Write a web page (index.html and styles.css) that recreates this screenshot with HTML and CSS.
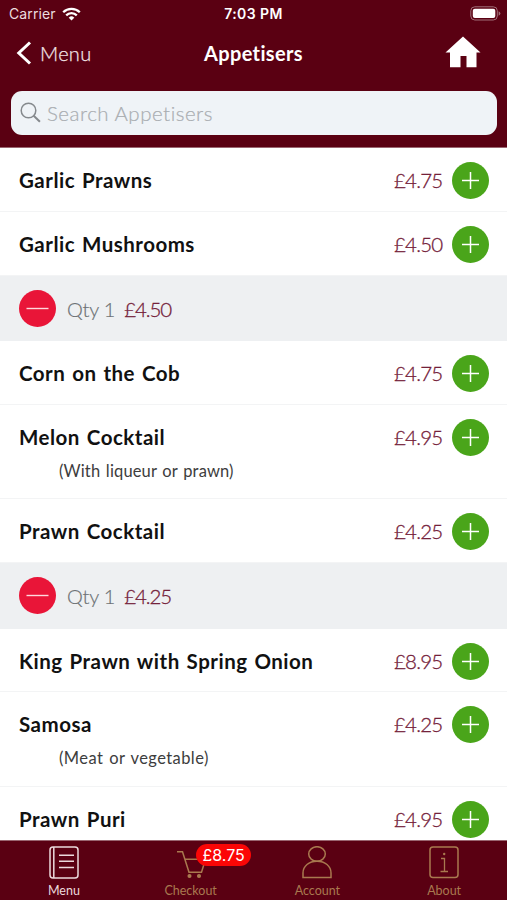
FILE: index.html
```html
<!DOCTYPE html>
<html lang="en">
<head>
<meta charset="utf-8">
<title>Appetisers</title>
<link rel="stylesheet" href="styles.css">
</head>
<body>
<svg class="sprite" aria-hidden="true">
  <symbol id="plus" viewBox="0 0 37 37"><circle cx="18.5" cy="18.5" r="18.5" fill="#4aa51a"/><path d="M10 18.5h17M18.5 10v17" stroke="#fff" stroke-width="1.5"/></symbol>
  <symbol id="minus" viewBox="0 0 37 37"><circle cx="18.5" cy="18.5" r="18.5" fill="#e91538"/><path d="M7.500 18.500h22" stroke="#ffd9dd" stroke-width="1.400"/></symbol>
</svg>
<header class="header">
  <div class="status">
    <div class="carrier"><span>Carrier</span>
      <svg width="19" height="14" viewBox="0 0 19 14" fill="none" stroke="#fff" stroke-width="2.300"><path d="M1.200 5.200a11.800 11.800 0 0 1 16.600 0M4.200 8.400a7.500 7.500 0 0 1 10.600 0"/><path d="M9.500 13.600 6.700 10.700a4 4 0 0 1 5.600 0z" fill="#fff" stroke="none"/></svg>
    </div>
    <div class="time">7:03 PM</div>
    <svg class="battery" width="31" height="15" viewBox="0 0 31 15"><rect x=".8" y=".8" width="26.500" height="13.200" rx="4" fill="none" stroke="#a06f79"/><rect x="2.800" y="2.800" width="22.500" height="9.200" rx="2" fill="#fff"/><path d="M28.600 5.200q1.800.8 1.800 2.300t-1.800 2.300z" fill="#a06f79"/></svg>
  </div>
  <nav class="nav">
    <div class="back"><svg width="16" height="24" viewBox="0 0 16 24" fill="none" stroke="#fff" stroke-width="3"><path d="M14 1.500 2.800 12 14 22.500"/></svg><span>Menu</span></div>
    <h1 class="title">Appetisers</h1>
    <svg class="home" width="36" height="32" viewBox="0 0 36 32" fill="#fff"><path d="M18 .5 35.500 16.500H31.500V31.300H21.500V20H15.500V31.300H5V16.500H.5z"/></svg>
  </nav>
  <div class="search">
    <svg width="21" height="21" viewBox="0 0 21 21" fill="none" stroke="#85898d" stroke-width="1.500"><circle cx="8.500" cy="8.500" r="7.300"/><path d="m13.700 13.700 6.200 6" stroke-width="2"/></svg>
    <span>Search Appetisers</span>
  </div>
</header>
<main class="list">
  <section class="row"><div class="line"><h2>Garlic Prawns</h2><span class="price">£4.75</span><svg class="btn"><use href="#plus"/></svg></div></section>
  <section class="row"><div class="line"><h2>Garlic Mushrooms</h2><span class="price">£4.50</span><svg class="btn"><use href="#plus"/></svg></div></section>
  <div class="qty"><svg class="btn"><use href="#minus"/></svg><span class="count">Qty 1</span><span class="price">£4.50</span></div>
  <section class="row"><div class="line"><h2>Corn on the Cob</h2><span class="price">£4.75</span><svg class="btn"><use href="#plus"/></svg></div></section>
  <section class="row tall"><div class="line"><h2>Melon Cocktail</h2><span class="price">£4.95</span><svg class="btn"><use href="#plus"/></svg></div><p>(With liqueur or prawn)</p></section>
  <section class="row"><div class="line"><h2>Prawn Cocktail</h2><span class="price">£4.25</span><svg class="btn"><use href="#plus"/></svg></div></section>
  <div class="qty"><svg class="btn"><use href="#minus"/></svg><span class="count">Qty 1</span><span class="price">£4.25</span></div>
  <section class="row"><div class="line"><h2>King Prawn with Spring Onion</h2><span class="price">£8.95</span><svg class="btn"><use href="#plus"/></svg></div></section>
  <section class="row tall"><div class="line"><h2>Samosa</h2><span class="price">£4.25</span><svg class="btn"><use href="#plus"/></svg></div><p class="wide">(Meat or vegetable)</p></section>
  <section class="row"><div class="line"><h2>Prawn Puri</h2><span class="price">£4.95</span><svg class="btn"><use href="#plus"/></svg></div></section>
</main>
<footer class="tabs">
  <div class="tab active"><svg width="30" height="33" viewBox="0 0 30 33"><rect x="1" y="1" width="28" height="31" rx="3"/><path d="M4.800 1v31M10 9.200h15M10 15.300h15M10 21.500h15"/></svg><span>Menu</span></div>
  <div class="tab"><div class="cart"><svg width="30" height="33" viewBox="0 0 30 33"><path d="M1 5.800h5.500l6.500 20.500h12.500l4-13H8.700"/><circle cx="13.500" cy="30" r="1.300" fill="currentColor"/><circle cx="23" cy="30" r="1.300" fill="currentColor"/></svg><b class="badge">£8.75</b></div><span>Checkout</span></div>
  <div class="tab"><svg width="30" height="33" viewBox="0 0 30 33"><ellipse cx="15" cy="8" rx="8.300" ry="7.300"/><path d="M1 31.500V27C1 20 7 15.300 15 15.300S29 20 29 27v4.500z"/></svg><span>Account</span></div>
  <div class="tab"><svg width="30" height="33" viewBox="0 0 30 33"><rect x="1" y="1" width="28" height="30.500" rx="3"/><path d="M12 12.500h3.500v13M11.500 25.500h7.500" stroke-width="1.300"/><circle cx="15.200" cy="8" r="1.200" fill="currentColor" stroke="none"/></svg><span>About</span></div>
</footer>
</body>
</html>
```
FILE: styles.css
```css
* { box-sizing: border-box; margin: 0; }
body { width: 507px; height: 900px; overflow: hidden; display: flex; flex-direction: column; background: #fff; font-family: Lato, "Open Sans", sans-serif; }
svg { display: block; flex: none; }
.sprite { position: absolute; width: 0; height: 0; }
.header { flex: none; height: 148px; background: #5a0012; color: #fff; border-bottom: 1px solid #9a6670; }
.status { height: 27px; display: grid; grid-template-columns: 1fr auto 1fr; align-items: center; padding: 0 6px 0 9px; font-family: Inter, sans-serif; }
.carrier { display: flex; align-items: center; gap: 6px; font-size: 14px; color: #ecdcdf; letter-spacing: .1px; }
.time { font-size: 14px; font-weight: 600; letter-spacing: .4px; margin-right: 3px; }
.battery { justify-self: end; }
.nav { height: 51px; display: grid; grid-template-columns: 1fr auto 1fr; align-items: center; padding: 0 16px; }
.back { display: flex; align-items: center; gap: 8px; font-size: 20px; font-weight: 300; color: #f3e6e8; letter-spacing: .3px; -webkit-text-stroke: .25px; }
.title { font-size: 20px; font-weight: 700; letter-spacing: .35px; }
.home { justify-self: end; margin: 0 10px 2px 0; }
.search { height: 44px; margin: 13px 10px 0 11px; padding: 0 0 1px 9px; border-radius: 11px; background: #eff3f7; display: flex; align-items: center; gap: 6px; font-size: 20.5px; font-weight: 300; color: #a9adb1; letter-spacing: .5px; -webkit-text-stroke: .2px; }
.list { flex: 1; min-height: 0; overflow: hidden; padding-top: .4px; }
.row { height: 63.8px; padding: 14px 18px 0 19px; border-bottom: 1px solid #f3f4f5; }
.tall { height: 94.2px; }
.line { display: flex; align-items: center; height: 37px; }
h2 { flex: 1; padding-bottom: 1px; font-size: 20.5px; font-weight: 700; letter-spacing: .5px; word-spacing: 1.4px; color: #111; white-space: nowrap; }
.price { font-size: 20.5px; font-weight: 300; color: #74213a; letter-spacing: -.75px; -webkit-text-stroke: .3px; }
.line .price { margin-right: 9.5px; padding-bottom: 1px; }
.btn { width: 37px; height: 37px; }
.row p { margin: 5px 0 0 40px; font-size: 16.5px; line-height: 20px; letter-spacing: .15px; word-spacing: 1.2px; color: #3d3d3d; }
.row .wide { letter-spacing: .42px; }
.qty { height: 65.4px; padding: 0 19px; background: #eef0f2; display: flex; align-items: center; }
.qty .price { letter-spacing: -1.1px; }
.count { margin: 0 9px 0 11px; font-size: 20px; font-weight: 300; letter-spacing: -.2px; color: #6d7275; -webkit-text-stroke: .2px; }
.tabs { flex: none; height: 60px; background: #5a0012; border-top: 1px solid #9a6670; display: grid; grid-template-columns: repeat(4, 1fr); }
.tab { color: #a9794f; display: flex; flex-direction: column; align-items: center; padding-top: 5px; font-size: 12.5px; line-height: 16px; gap: 4px; }
.tab > span { padding-left: 1px; }
.tab svg { fill: none; stroke: currentColor; stroke-width: 1.5; }
.tab > svg, .cart { margin-left: 1px; }
.active { color: #ecd9dc; }
.cart { position: relative; }
.badge { position: absolute; left: 20.5px; top: -2px; width: 55px; height: 22px; border-radius: 11px; background: #fb0606; color: #fff; font: 400 16px/22px Inter, sans-serif; text-align: center; }
```
